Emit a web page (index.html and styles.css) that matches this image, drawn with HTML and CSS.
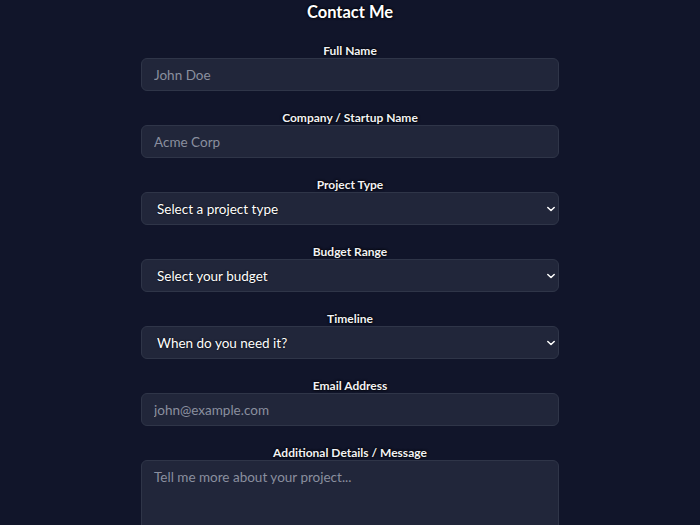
FILE: index.html
```html
<!DOCTYPE html>
<html lang="en">
<head>
<meta charset="utf-8">
<title>Contact Me</title>
<link rel="stylesheet" href="styles.css">
</head>
<body>
<main class="page">
  <h1 class="title">Contact Me</h1>
  <form class="form">
    <div class="group">
      <label class="label" for="name">Full Name</label>
      <input class="field" id="name" type="text" placeholder="John Doe">
    </div>
    <div class="group">
      <label class="label" for="company">Company / Startup Name</label>
      <input class="field" id="company" type="text" placeholder="Acme Corp">
    </div>
    <div class="group">
      <label class="label" for="ptype">Project Type</label>
      <div class="select-wrap">
        <select class="field select" id="ptype"><option>Select a project type</option></select>
        <svg class="chev" viewBox="0 0 10 6" width="8" height="6"><path d="M1 1 L5 5 L9 1" fill="none" stroke="#fff" stroke-width="1.8" stroke-linecap="round" stroke-linejoin="round"/></svg>
      </div>
    </div>
    <div class="group">
      <label class="label" for="budget">Budget Range</label>
      <div class="select-wrap">
        <select class="field select" id="budget"><option>Select your budget</option></select>
        <svg class="chev" viewBox="0 0 10 6" width="8" height="6"><path d="M1 1 L5 5 L9 1" fill="none" stroke="#fff" stroke-width="1.8" stroke-linecap="round" stroke-linejoin="round"/></svg>
      </div>
    </div>
    <div class="group">
      <label class="label" for="timeline">Timeline</label>
      <div class="select-wrap">
        <select class="field select" id="timeline"><option>When do you need it?</option></select>
        <svg class="chev" viewBox="0 0 10 6" width="8" height="6"><path d="M1 1 L5 5 L9 1" fill="none" stroke="#fff" stroke-width="1.8" stroke-linecap="round" stroke-linejoin="round"/></svg>
      </div>
    </div>
    <div class="group">
      <label class="label" for="email">Email Address</label>
      <input class="field" id="email" type="email" placeholder="john@example.com">
    </div>
    <div class="group">
      <label class="label" for="msg">Additional Details / Message</label>
      <textarea class="field area" id="msg" placeholder="Tell me more about your project..."></textarea>
    </div>
  </form>
</main>
</body>
</html>
```

FILE: styles.css
```css
html, body {
  margin: 0;
  padding: 0;
  background: #11152a;
  height: 100%;
  overflow: hidden;
}
body {
  font-family: "Lato", "Noto Sans", sans-serif;
  color: #fff;
}
.page {
  width: 418px;
  margin: 0 auto;
}
.title {
  margin: 0 0 20px;
  font-size: 16.5px;
  line-height: 24px;
  font-weight: 700;
  text-align: center;
  text-shadow: 0 0 3px #000, 0 0 2px #000;
}
.form {
  display: flex;
  flex-direction: column;
  gap: 20px;
}
.group {
  display: flex;
  flex-direction: column;
}
.label {
  display: block;
  text-align: center;
  font-size: 12px;
  line-height: 14px;
  font-weight: 700;
  color: #f1f2f5;
  text-shadow: 0 0 3px #000, 0 0 2px #000;
}
.field {
  box-sizing: border-box;
  width: 100%;
  height: 33px;
  margin: 0;
  padding: 0 12px;
  background: #21263a;
  border: 1px solid #2f3548;
  border-radius: 6px;
  color: #fff;
  font-family: inherit;
  font-size: 13.5px;
  outline: none;
}
.field::placeholder {
  color: #8a8f9f;
}
.select-wrap {
  position: relative;
}
.select {
  appearance: none;
  -webkit-appearance: none;
  padding-left: 15px;
  font-size: 13.5px;
  color: #fff;
  text-shadow: 0 0 2px #000;
}
.chev {
  position: absolute;
  right: 4px;
  top: 14px;
  pointer-events: none;
}
.area {
  height: 110px;
  padding: 7px 12px;
  resize: none;
  line-height: 18px;
}
```
